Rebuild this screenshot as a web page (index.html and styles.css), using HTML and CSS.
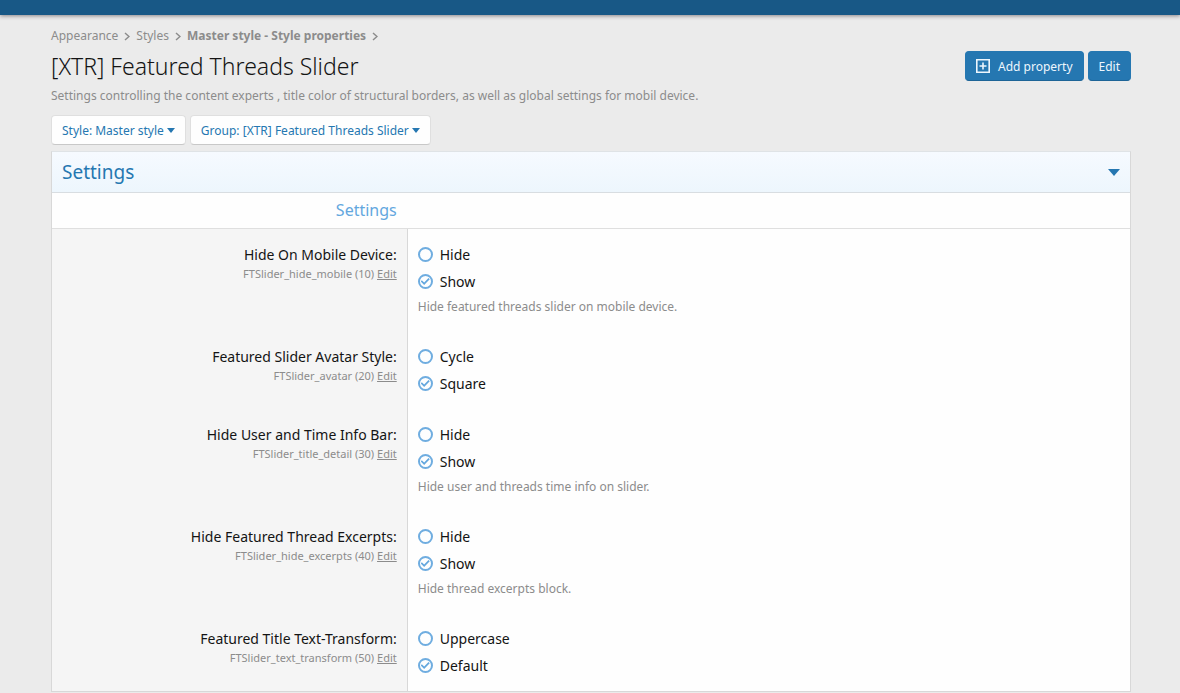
FILE: index.html
```html
<!DOCTYPE html>
<html lang="en">
<head>
    <meta charset="UTF-8">
    <meta name="viewport" content="width=device-width, initial-scale=1.0">
    <title>[XTR] Featured Threads Slider</title>
    <link rel="stylesheet" href="styles.css">
</head>
<body>
    <header class="top-bar"></header>

    <main class="page">
        <nav class="breadcrumbs">
            <a href="#">Appearance</a>
            <svg class="chevron" viewBox="0 0 6 9"><path d="M1 1l4 3.500-4 3.500"/></svg>
            <a href="#">Styles</a>
            <svg class="chevron" viewBox="0 0 6 9"><path d="M1 1l4 3.500-4 3.500"/></svg>
            <a href="#" class="current">Master style - Style properties</a>
            <svg class="chevron" viewBox="0 0 6 9"><path d="M1 1l4 3.500-4 3.500"/></svg>
        </nav>

        <div class="page-header">
            <h1>[XTR] Featured Threads Slider</h1>
            <div class="page-actions">
                <button type="button" class="button">
                    <svg class="icon-plus" viewBox="0 0 14 14"><path d="M.8.8h12.400v12.400H.8zM7 3.500v7M3.500 7h7"/></svg>
                    Add property
                </button>
                <button type="button" class="button">Edit</button>
            </div>
        </div>
        <p class="description">Settings controlling the content experts , title color of structural borders, as well as global settings for mobil device.</p>

        <div class="filters">
            <button type="button" class="menu-button">Style: Master style <span class="caret"></span></button>
            <button type="button" class="menu-button">Group: [XTR] Featured Threads Slider <span class="caret"></span></button>
        </div>

        <form class="block">
            <h2 class="block-header">Settings <span class="caret caret-large"></span></h2>
            <h3 class="block-subheader"><span>Settings</span></h3>

            <div class="form-row">
                <div class="form-label">
                    <div class="label-text" id="label-mobile">Hide On Mobile Device:</div>
                    <div class="label-hint">FTSlider_hide_mobile (10) <a href="#">Edit</a></div>
                </div>
                <div class="form-field" role="radiogroup" aria-labelledby="label-mobile">
                    <label class="choice"><input type="radio" name="hide_mobile"> Hide</label>
                    <label class="choice"><input type="radio" name="hide_mobile" checked> Show</label>
                    <div class="explain">Hide featured threads slider on mobile device.</div>
                </div>
            </div>

            <div class="form-row">
                <div class="form-label">
                    <div class="label-text" id="label-avatar">Featured Slider Avatar Style:</div>
                    <div class="label-hint">FTSlider_avatar (20) <a href="#">Edit</a></div>
                </div>
                <div class="form-field" role="radiogroup" aria-labelledby="label-avatar">
                    <label class="choice"><input type="radio" name="avatar"> Cycle</label>
                    <label class="choice"><input type="radio" name="avatar" checked> Square</label>
                </div>
            </div>

            <div class="form-row">
                <div class="form-label">
                    <div class="label-text" id="label-detail">Hide User and Time Info Bar:</div>
                    <div class="label-hint">FTSlider_title_detail (30) <a href="#">Edit</a></div>
                </div>
                <div class="form-field" role="radiogroup" aria-labelledby="label-detail">
                    <label class="choice"><input type="radio" name="title_detail"> Hide</label>
                    <label class="choice"><input type="radio" name="title_detail" checked> Show</label>
                    <div class="explain">Hide user and threads time info on slider.</div>
                </div>
            </div>

            <div class="form-row">
                <div class="form-label">
                    <div class="label-text" id="label-excerpts">Hide Featured Thread Excerpts:</div>
                    <div class="label-hint">FTSlider_hide_excerpts (40) <a href="#">Edit</a></div>
                </div>
                <div class="form-field" role="radiogroup" aria-labelledby="label-excerpts">
                    <label class="choice"><input type="radio" name="hide_excerpts"> Hide</label>
                    <label class="choice"><input type="radio" name="hide_excerpts" checked> Show</label>
                    <div class="explain">Hide thread excerpts block.</div>
                </div>
            </div>

            <div class="form-row">
                <div class="form-label">
                    <div class="label-text" id="label-transform">Featured Title Text-Transform:</div>
                    <div class="label-hint">FTSlider_text_transform (50) <a href="#">Edit</a></div>
                </div>
                <div class="form-field" role="radiogroup" aria-labelledby="label-transform">
                    <label class="choice"><input type="radio" name="text_transform"> Uppercase</label>
                    <label class="choice"><input type="radio" name="text_transform" checked> Default</label>
                </div>
            </div>
        </form>
    </main>
</body>
</html>
```

FILE: styles.css
```css
* {
    box-sizing: border-box;
}
body {
    margin: 0;
    font-family: "Segoe UI", "Noto Sans", "Open Sans", sans-serif;
    font-size: 14px;
    line-height: 21px;
    color: #141414;
    background-color: #ebebeb;
}
h1, h2, h3, p {
    margin: 0;
    font-weight: 400;
}
button {
    font-family: inherit;
    cursor: pointer;
}
.top-bar {
    height: 15px;
    background-color: #185886;
    box-shadow: 0 1px 4px rgba(20, 10, 20, 0.45);
}
.page {
    padding: 11px 49px 0 51px;
}

/* Page header */
.breadcrumbs {
    display: flex;
    align-items: center;
    gap: 6px;
    font-size: 12px;
    line-height: 20px;
}
.breadcrumbs a {
    color: #8c8c8c;
    text-decoration: none;
}
.breadcrumbs .current {
    font-weight: 700;
}
.chevron {
    width: 6px;
    height: 9px;
    fill: none;
    stroke: #8c8c8c;
    stroke-width: 1.5;
}
.page-header {
    display: flex;
    align-items: center;
    justify-content: space-between;
    height: 40px;
}
.page-header h1 {
    font-size: 23px;
    font-weight: 300;
    line-height: 32px;
}
.page-actions {
    display: flex;
    gap: 4px;
}
.button {
    display: flex;
    align-items: center;
    gap: 8px;
    height: 30px;
    padding: 0 10px;
    font-size: 12px;
    color: #edf6fd;
    background-color: #2577b1;
    border: 1px solid #2577b1;
    border-bottom-color: #1d6497;
    border-radius: 4px;
}
.icon-plus {
    width: 14px;
    height: 14px;
    fill: none;
    stroke: currentColor;
    stroke-width: 1.6;
}
.description {
    font-size: 12px;
    line-height: 20px;
    color: #8c8c8c;
}
.filters {
    display: flex;
    gap: 4px;
    margin: 9px 0 6px;
}
.menu-button {
    display: flex;
    align-items: center;
    gap: 3px;
    height: 30px;
    padding: 0 10px;
    font-size: 12px;
    color: #2577b1;
    background-color: #fefefe;
    border: 1px solid #dfdfdf;
    border-bottom-color: #c8c8c8;
    border-radius: 4px;
}
.caret {
    border: 4px solid transparent;
    border-top: 5px solid #2577b1;
    border-bottom: 0;
}
.caret-large {
    border-width: 7px 6px 0;
}

/* Settings block */
.block {
    background-color: #fefefe;
    border: 1px solid #d8d8d8;
    border-top-color: #dfe3e6;
}
.block-header {
    display: flex;
    align-items: center;
    justify-content: space-between;
    padding: 6px 10px;
    font-size: 19px;
    line-height: 28px;
    color: #2577b1;
    background: linear-gradient(#f6faff, #edf6fd);
    border-bottom: 1px solid #d8dde1;
}
.block-subheader {
    padding: 7px 0;
    font-size: 16px;
    color: #63a7de;
    border-bottom: 1px solid #dfdfdf;
}
.block-subheader span {
    display: block;
    width: 33%;
    padding-right: 11px;
    text-align: right;
}
.form-row {
    display: flex;
}
.form-label {
    width: 33%;
    padding: 15px 10px;
    text-align: right;
    background-color: #f5f5f5;
    border-right: 1px solid #d8d8d8;
}
.label-hint {
    font-size: 11px;
    line-height: 18px;
    color: #8c8c8c;
}
.label-hint a {
    color: inherit;
}
.form-field {
    display: flex;
    flex: 1;
    flex-direction: column;
    gap: 6px;
    padding: 15px 10px;
}
.choice {
    display: flex;
    align-items: center;
    gap: 7px;
}
.choice input {
    display: grid;
    place-items: center;
    width: 15px;
    height: 15px;
    margin: 0;
    appearance: none;
    border: 2px solid #6fade0;
    border-radius: 50%;
}
.choice input:checked::before {
    content: "";
    width: 9px;
    height: 9px;
    background-color: #63a7de;
    clip-path: polygon(0 50%, 12% 36%, 38% 60%, 86% 12%, 100% 26%, 38% 88%);
}
.explain {
    font-size: 12px;
    line-height: 18px;
    color: #8c8c8c;
}
```
